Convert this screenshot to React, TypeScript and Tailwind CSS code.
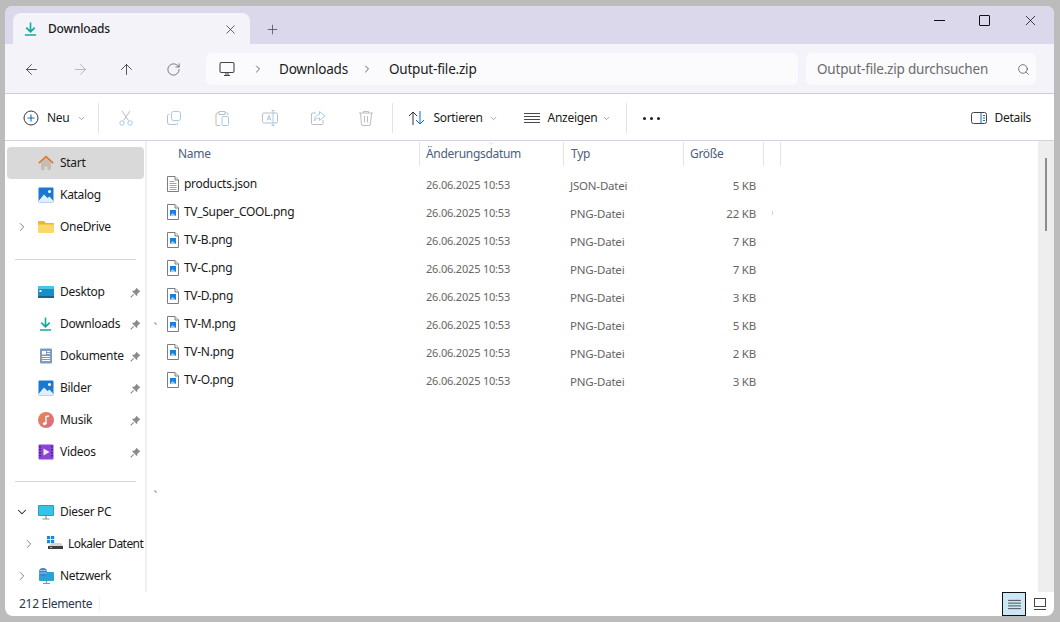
import { ReactNode } from "react";
import { ArrowLeft, ArrowRight, ArrowUp, ChevronDown, ChevronRight, Plus, RotateCw, Search, X } from "lucide-react";

const files = [
  { name: "products.json", type: "JSON-Datei", size: "5 KB" },
  { name: "TV_Super_COOL.png", type: "PNG-Datei", size: "22 KB" },
  { name: "TV-B.png", type: "PNG-Datei", size: "7 KB" },
  { name: "TV-C.png", type: "PNG-Datei", size: "7 KB" },
  { name: "TV-D.png", type: "PNG-Datei", size: "3 KB" },
  { name: "TV-M.png", type: "PNG-Datei", size: "5 KB" },
  { name: "TV-N.png", type: "PNG-Datei", size: "2 KB" },
  { name: "TV-O.png", type: "PNG-Datei", size: "3 KB" },
];

function DownloadIcon({ className }: { className?: string }) {
  return (
    <svg viewBox="0 0 16 16" className={className}>
      <defs>
        <linearGradient id="dl" x1="0" y1="0" x2="0" y2="1">
          <stop offset="0" stopColor="#1fb48c" />
          <stop offset="1" stopColor="#12a5a0" />
        </linearGradient>
      </defs>
      <path d="M8 1v9.500M3.500 6.500 8 11l4.500-4.500" fill="none" stroke="url(#dl)" strokeWidth="1.800" />
      <path d="M2 14.500h12" stroke="#16a89a" strokeWidth="1.600" />
    </svg>
  );
}

function FileIcon({ text }: { text?: boolean }) {
  return (
    <svg viewBox="0 0 14 16" className="w-[14px] h-4 shrink-0">
      <path d="M1.500.5h7.500l3.500 3.500v11.500h-11z" fill="#fff" stroke="#7d7d7d" />
      <path d="M9 .5V4h3.500" fill="#eee" stroke="#7d7d7d" />
      {text ? (
        <path d="M3.500 5.500h5M3.500 7.500h7M3.500 9.500h7M3.500 11.500h7M3.500 13.500h7" stroke="#a3a3a3" />
      ) : (
        <>
          <rect x="4" y="6" width="6" height="6" fill="#1f7fd6" />
          <path d="M4 12l2.500-3 3.500 3z" fill="#9fd0f5" />
        </>
      )}
    </svg>
  );
}

function Pin() {
  return (
    <svg viewBox="0 0 12 12" className="w-[11px] h-[11px]">
      <path d="M7 .8 11.200 5 9.800 5.600 8 7.600 7.600 10 2 4.400 4.400 4l2-1.800z" fill="#8b8b8b" />
      <path d="M4 8 .8 11.200" stroke="#8b8b8b" strokeWidth="1.200" />
    </svg>
  );
}

function Home() {
  return (
    <svg viewBox="0 0 16 16" className="w-4 h-4">
      <path d="M3 7.500 8 3l5 4.500V15H9.500v-3.500h-3V15H3z" fill="#c4bdb6" />
      <path d="M.8 8.200 8 1.600l7.200 6.600" fill="none" stroke="#e0782c" strokeWidth="1.600" />
    </svg>
  );
}

function Gallery() {
  return (
    <svg viewBox="0 0 16 16" className="w-4 h-4">
      <rect x="0.5" y="0.5" width="15" height="15" rx="1" fill="#1b78d0" />
      <circle cx="11.500" cy="4.500" r="1.500" fill="#fff" />
      <path d="M.5 14 6 7.500l3.500 3.500 2-1.500 4 4.500v1.500h-15z" fill="#dff0fc" />
    </svg>
  );
}

function Folder() {
  return (
    <svg viewBox="0 0 16 16" className="w-4 h-4">
      <path d="M0 3a1 1 0 0 1 1-1h5l2 2h7a1 1 0 0 1 1 1v1H0z" fill="#eeb533" />
      <path d="M0 5.500h16V13a1 1 0 0 1-1 1H1a1 1 0 0 1-1-1z" fill="#fbd968" />
    </svg>
  );
}

function Desktop() {
  return (
    <svg viewBox="0 0 16 16" className="w-4 h-4">
      <rect y="2" width="16" height="12" rx="1" fill="#1b8fc4" />
      <rect y="2" width="16" height="3" fill="#45c7e6" />
      <rect x="1.500" y="6" width="2" height="2" fill="#fff" />
      <rect y="12" width="16" height="2" fill="#14648e" />
    </svg>
  );
}

function Docs() {
  return (
    <svg viewBox="0 0 16 16" className="w-4 h-4">
      <rect x="2" y="0.5" width="12" height="15" rx="1" fill="#7d9cc0" />
      <rect x="4" y="3" width="4" height="3.500" fill="#fff" />
      <path d="M9 3.500h3M9 5.500h3M4 8.500h8M4 10.500h8M4 12.500h8" stroke="#fff" />
    </svg>
  );
}

function Music() {
  return (
    <svg viewBox="0 0 16 16" className="w-4 h-4">
      <defs>
        <linearGradient id="mu" x1="0" y1="0" x2="1" y2="1">
          <stop offset="0" stopColor="#e88a4a" />
          <stop offset="1" stopColor="#d8688c" />
        </linearGradient>
      </defs>
      <circle cx="8" cy="8" r="8" fill="url(#mu)" />
      <path d="M8 12V4.500l3-.5" fill="none" stroke="#fff" strokeWidth="1.300" />
      <circle cx="6.600" cy="11.600" r="1.700" fill="#fff" />
    </svg>
  );
}

function Videos() {
  return (
    <svg viewBox="0 0 16 16" className="w-4 h-4">
      <rect x="0.5" y="0.5" width="15" height="15" rx="1" fill="#8a45d8" />
      <path d="M5.500 4.500 11.500 8l-6 3.500z" fill="#f3e9ff" />
      <path d="M2 2v12M14 2v12" stroke="#2f1a66" strokeWidth="1.400" strokeDasharray="1.400 1.600" />
    </svg>
  );
}

function Pc() {
  return (
    <svg viewBox="0 0 16 16" className="w-4 h-4">
      <rect y="1" width="16" height="11" rx="1" fill="#18a3d6" />
      <rect x="1" y="2" width="14" height="9" fill="#36c4e6" />
      <path d="M8 12v2.500M4.500 15h7" stroke="#7f98a6" strokeWidth="1.200" />
    </svg>
  );
}

function Drive() {
  return (
    <svg viewBox="0 0 16 16" className="w-4 h-4">
      <rect x="0" y="0" width="3.200" height="3.200" fill="#1b86e0" />
      <rect x="4" y="0" width="3.200" height="3.200" fill="#1b86e0" />
      <rect x="0" y="4" width="3.200" height="3.200" fill="#1b86e0" />
      <rect x="4" y="4" width="3.200" height="3.200" fill="#1b86e0" />
      <path d="M2 10l2-3h10l2 3z" fill="#d5d5d5" />
      <rect x="1" y="10" width="15" height="3" fill="#3f3f3f" />
      <rect x="3" y="11" width="2" height="1" fill="#7ee07a" />
    </svg>
  );
}

function Net() {
  return (
    <svg viewBox="0 0 16 16" className="w-4 h-4">
      <rect x="1" y="4" width="15" height="9" rx="1" fill="#2aa3d0" />
      <circle cx="5" cy="4" r="4" fill="#3f86c9" />
      <path d="M2 2.500h6M1.200 5h7.500" stroke="#bfe3f7" strokeWidth=".7" />
      <path d="M8.500 13v2M5 15.500h7" stroke="#7f98a6" strokeWidth="1.200" />
    </svg>
  );
}

function NavRow({ icon, label, pin, arrow, open, indent, selected }: { icon: ReactNode; label: string; pin?: boolean; arrow?: boolean; open?: boolean; indent?: boolean; selected?: boolean }) {
  return (
    <div className={`h-8 flex items-center shrink-0 overflow-hidden rounded ${selected ? "bg-[#d9d9d9]" : ""}`}>
      <div className={`flex justify-center shrink-0 ${indent ? "w-[40px] pl-[3px]" : "w-[31px] pr-[1px]"}`}>
        {arrow && <ChevronRight className="w-[14px] h-[14px] text-[#777]" strokeWidth={1.6} />}
        {open && <ChevronDown className="w-[14px] h-[14px] text-[#222]" strokeWidth={1.8} />}
      </div>
      <div className={`shrink-0 ${indent ? "w-[20px]" : "w-[21px]"}`}>{icon}</div>
      <span className={`text-[12px] whitespace-nowrap text-[#1a1a1a] flex-1 pl-px ${indent ? "tracking-[-0.55px]" : "tracking-[-0.3px]"}`}>{label}</span>
      {pin && <div className="pr-[3px]"><Pin /></div>}
    </div>
  );
}

function Sep() {
  return <div className="w-px h-[30px] bg-[#e3e3e3] shrink-0" />;
}

function Ghost({ children }: { children: ReactNode }) {
  return <div className="w-[48px] flex justify-center shrink-0">{children}</div>;
}

export default function App() {
  return (
    <div className="w-[1060px] h-[622px] bg-[#bcbcbc] pt-[6px] pl-[5px] pr-[6px] pb-[6px] overflow-hidden font-['Noto_Sans',sans-serif]">
      <div className="relative h-full rounded-lg overflow-hidden bg-white flex flex-col">
        {/* tab strip */}
        <div className="h-[38px] bg-[#dcd8ec] flex items-end pl-[8px] shrink-0">
          <div className="w-[237px] h-[31px] bg-[#f4f3fa] rounded-t-lg flex items-center pl-[10px] pr-[12px] pt-[1px]">
            <DownloadIcon className="w-[15px] h-[16px]" />
            <span className="ml-[10px] text-[12px] tracking-[-0.2px] font-medium text-[#1c1c1c] flex-1">Downloads</span>
            <X className="w-[15px] h-[15px] text-[#333]" strokeWidth={1.2} />
          </div>
          <div className="h-[31px] flex items-center ml-[15px] pt-[1px]">
            <Plus className="w-[15px] h-[15px] text-[#444]" strokeWidth={1.2} />
          </div>
          <div className="flex-1" />
          <div className="self-start flex items-center h-[28px] pr-[15px]">
            <div className="w-[11px] h-px bg-[#111]" />
            <div className="w-[11px] h-[11px] border border-[#111] rounded-[1px] ml-[34px]" />
            <X className="w-[17px] h-[17px] text-[#111] ml-[32px]" strokeWidth={1.1} />
          </div>
        </div>

        {/* address bar */}
        <div className="h-[50px] bg-[#f4f3fa] border-b border-[#cfcbdd] flex items-center pl-[18px] pr-[18px] shrink-0 pt-px">
          <ArrowLeft className="w-[17px] h-[17px] text-[#2b2b2b]" strokeWidth={1.1} />
          <ArrowRight className="w-[17px] h-[17px] text-[#a8a8a8] ml-[32px]" strokeWidth={1.1} />
          <ArrowUp className="w-[17px] h-[17px] text-[#2b2b2b] ml-[29px]" strokeWidth={1.1} />
          <RotateCw className="w-[15px] h-[15px] text-[#444] ml-[31px]" strokeWidth={1.1} />
          <div className="w-[592px] h-8 ml-[25px] bg-[#fbfbfe] rounded-md flex items-center pl-[13px] text-[13.5px] tracking-[-0.2px] text-[#1c1c1c]">
            <svg viewBox="0 0 16 16" className="w-[16px] h-[16px] text-[#444]">
              <rect x="1" y="1.500" width="14" height="10" rx="1.500" fill="none" stroke="currentColor" strokeWidth="1.100" />
              <path d="M5 14.500h6M7 12v2M9 12v2" stroke="currentColor" />
            </svg>
            <ChevronRight className="w-[12px] h-[12px] ml-[17px] text-[#333]" strokeWidth={1.5} />
            <span className="ml-[15px]">Downloads</span>
            <ChevronRight className="w-[12px] h-[12px] ml-[13px] text-[#333]" strokeWidth={1.5} />
            <span className="ml-[16px]">Output-file.zip</span>
          </div>
          <div className="w-[230px] h-8 ml-[8px] bg-[#fbfbfe] rounded-md flex items-center pl-[11px] pr-[6px] text-[13.5px] tracking-[-0.2px] text-[#6b6b6b]">
            <span className="flex-1 whitespace-nowrap">Output-file.zip durchsuchen</span>
            <Search className="w-[13px] h-[13px] text-[#555]" strokeWidth={1.4} />
          </div>
        </div>

        {/* command bar */}
        <div className="h-[47px] border-b border-[#d5d1e2] flex items-center pl-[18px] pr-[23px] pt-[2px] text-[12px] tracking-[-0.3px] text-[#1c1c1c] shrink-0">
          <svg viewBox="0 0 16 16" className="w-4 h-4 shrink-0">
            <circle cx="8" cy="8" r="7" fill="none" stroke="#333" strokeWidth="1" />
            <path d="M8 4.500v7M4.500 8h7" stroke="#0f6cbd" strokeWidth="1.100" />
          </svg>
          <span className="ml-[8px]">Neu</span>
          <ChevronDown className="w-[9px] h-[9px] ml-[8px] text-[#888]" />
          <div className="ml-[12px]"><Sep /></div>
          <div className="ml-[3px] flex items-center">
            <Ghost>
              <svg viewBox="0 0 16 16" className="w-4 h-4" fill="none">
                <path d="M4 1l6.500 9.500M12 1 5.500 10.500" stroke="#bdbdbd" />
                <circle cx="4" cy="13" r="2.200" stroke="#a5cbea" />
                <circle cx="12" cy="13" r="2.200" stroke="#a5cbea" />
              </svg>
            </Ghost>
            <Ghost>
              <svg viewBox="0 0 16 16" className="w-4 h-4" fill="none">
                <rect x="5.500" y="1.500" width="9" height="9" rx="2" stroke="#a5cbea" />
                <path d="M3.500 4.500h-1a1 1 0 0 0-1 1v7a2 2 0 0 0 2 2h7a1 1 0 0 0 1-1v-1" stroke="#bdbdbd" />
              </svg>
            </Ghost>
            <Ghost>
              <svg viewBox="0 0 16 16" className="w-4 h-4" fill="none">
                <path d="M5 3H3a1 1 0 0 0-1 1v10.500a1 1 0 0 0 1 1h3M11 3h2a1 1 0 0 1 1 1v1M5 1.500h6v3H5z" stroke="#bdbdbd" />
                <rect x="8" y="6.500" width="6.500" height="9" rx="1" stroke="#a5cbea" />
              </svg>
            </Ghost>
            <Ghost>
              <svg viewBox="0 0 16 16" className="w-4 h-4" fill="none">
                <rect x="0.5" y="3" width="15" height="10" rx="1.500" stroke="#bdbdbd" />
                <path d="M5 10.500 7 5.500 9 10.500M5.800 9h2.400" stroke="#a5cbea" />
                <path d="M11 .5v15M9.500 .5h3M9.500 15.500h3" stroke="#a5cbea" />
              </svg>
            </Ghost>
            <Ghost>
              <svg viewBox="0 0 16 16" className="w-4 h-4" fill="none">
                <path d="M6 3H2.500a1 1 0 0 0-1 1v9.500a1 1 0 0 0 1 1H12a1 1 0 0 0 1-1V10" stroke="#bdbdbd" />
                <path d="M9.500 1.500 15 6l-5.500 4.500V8C7 8 5.500 9 4.500 11c0-4 2-6.500 5-6.500z" stroke="#a5cbea" />
              </svg>
            </Ghost>
            <Ghost>
              <svg viewBox="0 0 16 16" className="w-4 h-4" fill="none" stroke="#bdbdbd">
                <path d="M1 3h14M5.500 3V1.500h5V3M2.500 3l1 11a1.500 1.500 0 0 0 1.500 1.500h6a1.500 1.500 0 0 0 1.500-1.500l1-11M6.500 6v6.500M9.500 6v6.500" />
              </svg>
            </Ghost>
          </div>
          <div className="ml-[2px]"><Sep /></div>
          <svg viewBox="0 0 18 16" className="w-[18px] h-4 ml-[15px] shrink-0" fill="none">
            <path d="M5 15V2M1 6l4-4 4 4" stroke="#333" strokeWidth="1" />
            <path d="M12 1v13M8 10l4 4 4-4" stroke="#0f6cbd" strokeWidth="1" />
          </svg>
          <span className="ml-[7px]">Sortieren</span>
          <ChevronDown className="w-[9px] h-[9px] ml-[6px] text-[#888]" />
          <svg viewBox="0 0 16 12" className="w-4 h-3 ml-[26px] shrink-0">
            <path d="M0 1.500h16M0 4.500h16M0 7.500h16M0 10.500h16" stroke="#333" strokeWidth=".9" />
          </svg>
          <span className="ml-[8px]">Anzeigen</span>
          <ChevronDown className="w-[9px] h-[9px] ml-[5px] text-[#888]" />
          <div className="ml-[15px]"><Sep /></div>
          <div className="flex gap-[4px] ml-[16px]">
            <div className="w-[3px] h-[3px] rounded-full bg-[#222]" />
            <div className="w-[3px] h-[3px] rounded-full bg-[#222]" />
            <div className="w-[3px] h-[3px] rounded-full bg-[#222]" />
          </div>
          <div className="flex-1" />
          <svg viewBox="0 0 16 14" className="w-4 h-[14px] shrink-0" fill="none">
            <rect x="0.5" y="1.500" width="15" height="11" rx="2" stroke="#444" />
            <path d="M10 1.500v11" stroke="#0f6cbd" />
            <path d="M12 4.500h2M12 7h2M12 9.500h2" stroke="#0f6cbd" />
          </svg>
          <span className="ml-[8px]">Details</span>
        </div>

        {/* body */}
        <div className="flex-1 flex min-h-0">
          <div className="w-[142px] shrink-0 border-r-2 border-[#f0f0f0] pl-[2px] pr-[1px] pt-[6px] overflow-hidden flex flex-col">
            <NavRow icon={<Home />} label="Start" selected />
            <NavRow icon={<Gallery />} label="Katalog" />
            <NavRow icon={<Folder />} label="OneDrive" arrow />
            <div className="my-[16px] ml-[8px] mr-[8px] h-px bg-[#d5d5d5] shrink-0" />
            <NavRow icon={<Desktop />} label="Desktop" pin />
            <NavRow icon={<DownloadIcon className="w-[15px] h-4" />} label="Downloads" pin />
            <NavRow icon={<Docs />} label="Dokumente" pin />
            <NavRow icon={<Gallery />} label="Bilder" pin />
            <NavRow icon={<Music />} label="Musik" pin />
            <NavRow icon={<Videos />} label="Videos" pin />
            <div className="mt-[13px] mb-[14px] ml-[8px] mr-[8px] h-px bg-[#d5d5d5] shrink-0" />
            <NavRow icon={<Pc />} label="Dieser PC" open />
            <NavRow icon={<Drive />} label="Lokaler Datent" arrow indent />
            <NavRow icon={<Net />} label="Netzwerk" arrow />
          </div>

          <div className="flex-1 min-w-0 flex flex-col pl-[18px]">
            <div className="flex h-[25px] text-[12px] tracking-[-0.3px] text-[#4c607a] shrink-0 pt-[1px]">
              <div className="w-[255px] pl-[13px] border-r border-[#e5e5e5] flex items-center">Name</div>
              <div className="w-[144px] pl-[6px] border-r border-[#e5e5e5] flex items-center">Änderungsdatum</div>
              <div className="w-[120px] pl-[7px] border-r border-[#e5e5e5] flex items-center">Typ</div>
              <div className="w-[80px] pl-[6px] border-r border-[#e5e5e5] flex items-center">Größe</div>
              <div className="w-[17px] border-r border-[#e5e5e5]" />
            </div>
            <div className="flex flex-col pt-[4px]">
              {files.map((f) => (
                <div key={f.name} className="flex h-[28px] items-center shrink-0">
                  <div className="w-[255px] pl-px flex items-center gap-[4px] text-[12px] tracking-[-0.3px] text-[#1a1a1a]">
                    <FileIcon text={f.name.endsWith(".json")} />
                    <span>{f.name}</span>
                  </div>
                  <div className="w-[144px] pl-[6px] text-[11px] tracking-[-0.2px] text-[#666] pt-[3px]">26.06.2025 10:53</div>
                  <div className="w-[120px] pl-[6px] text-[11.5px] tracking-[-0.2px] text-[#666] pt-[3px]">{f.type}</div>
                  <div className="w-[72px] text-right text-[11.5px] tracking-[-0.2px] text-[#666] pt-[3px]">{f.size}</div>
                </div>
              ))}
            </div>
          </div>

          <div className="w-[16px] bg-[#eeeeee] pt-[17px] pl-[7px] shrink-0">
            <div className="w-[2px] h-[73px] bg-[#8c8c8c]" />
          </div>
        </div>

        {/* status bar */}
        <div className="h-[24px] flex items-center pl-[14px] shrink-0 text-[12px] tracking-[-0.3px] text-[#28384e]">
          <span className="w-[80px]">212 Elemente</span>
          <div className="w-px h-[14px] bg-[#eeeeee]" />
          <div className="flex-1" />
          <div className="w-[24px] h-full bg-[#cce8f6] border border-[#111] flex items-center justify-center">
            <svg viewBox="0 0 14 12" className="w-[13px] h-[11px]">
              <path d="M0 1.500h14M0 4.500h14M0 7.500h14M0 10.500h14" stroke="#444" />
            </svg>
          </div>
          <div className="w-[28px] flex justify-center">
            <svg viewBox="0 0 12 12" className="w-[12px] h-[12px]" fill="none">
              <rect x="0.5" y="0.5" width="11" height="8" stroke="#444" />
              <path d="M0 11.500h12" stroke="#444" />
            </svg>
          </div>
        </div>

        {/* small marks over the list */}
        <ChevronDown className="absolute left-[480px] top-[134px] w-[12px] h-[7px] text-[#888]" strokeWidth={1} />
        <div className="absolute left-[149px] top-[317px] w-[3px] h-px bg-[#888] rotate-45" />
        <div className="absolute left-[149px] top-[485px] w-[3px] h-px bg-[#888] rotate-45" />
        <div className="absolute left-[767px] top-[205px] w-px h-[4px] bg-[#bcdcf3]" />
      </div>
    </div>
  );
}
